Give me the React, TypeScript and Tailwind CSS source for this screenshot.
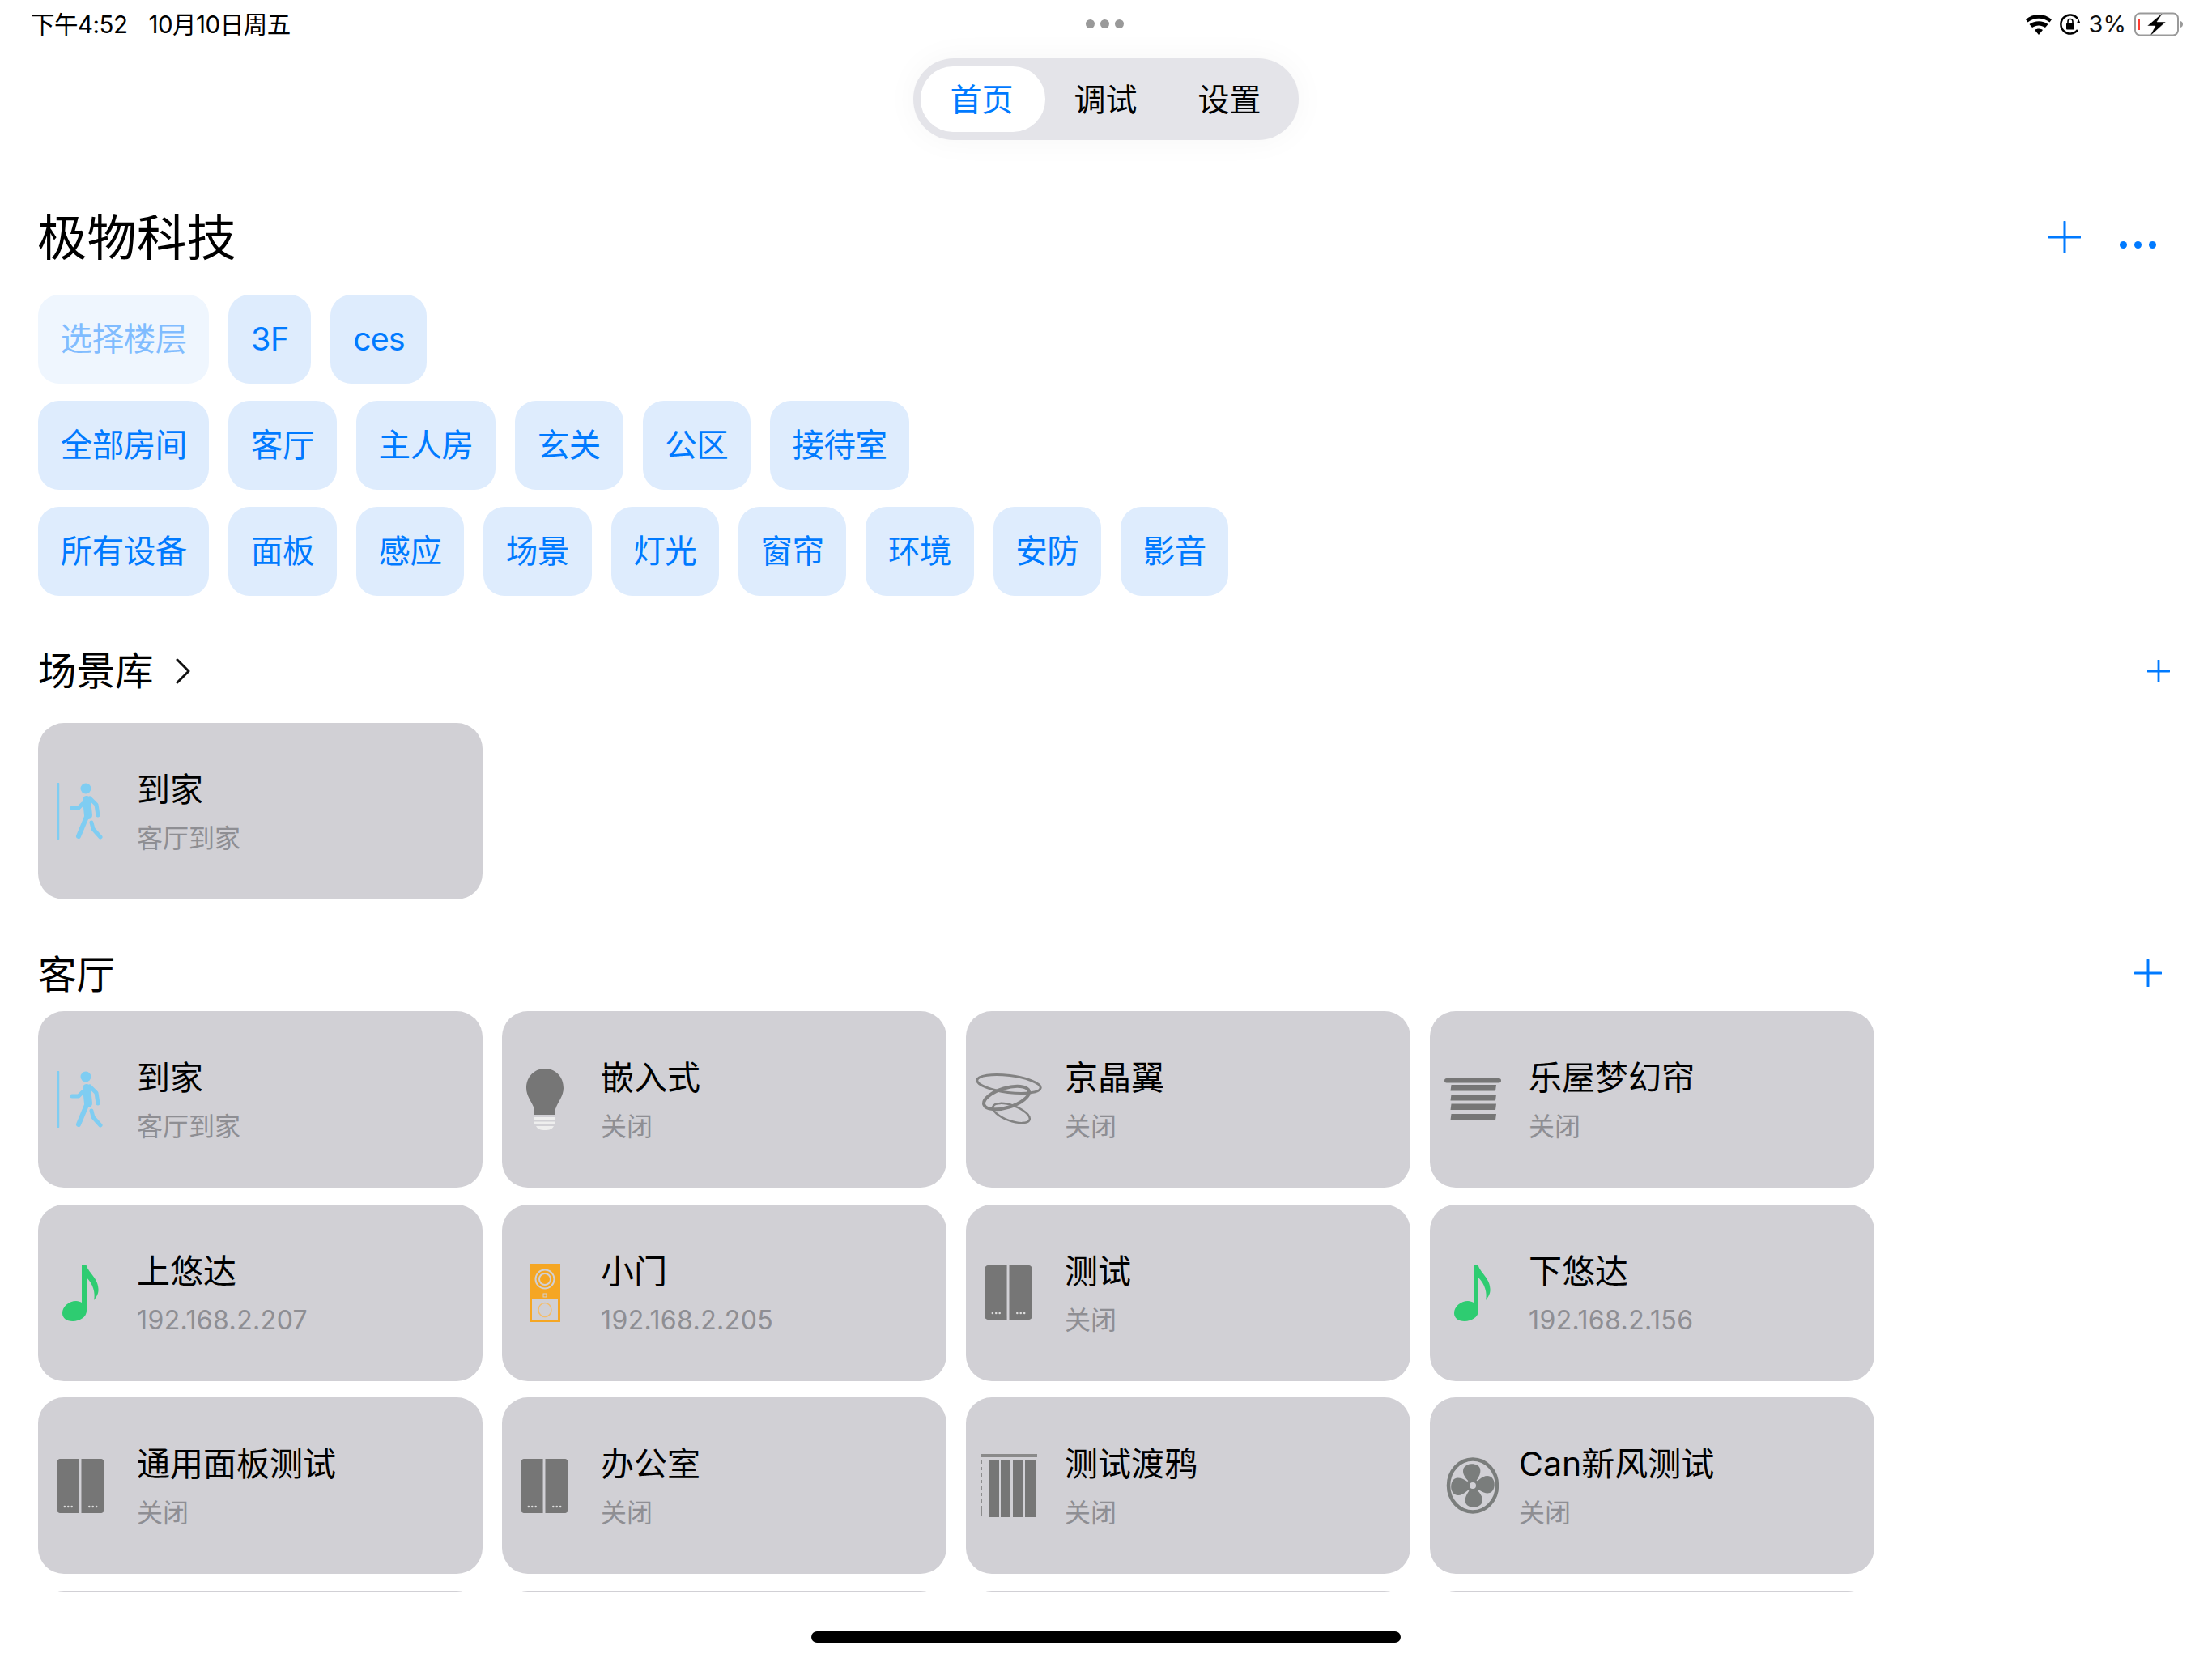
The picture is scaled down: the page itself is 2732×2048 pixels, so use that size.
import React from "react";

const Person = () => (
  <svg width="60" height="70" viewBox="0 0 60 70" fill="none">
    <path d="M2 1V69" stroke="#7fcdf2" strokeWidth="2.5" strokeLinecap="round" />
    <circle cx="36" cy="7" r="6.5" fill="#7fcdf2" />
    <path d="M19 31H27L32 26" stroke="#7fcdf2" strokeWidth="5" strokeLinecap="round" strokeLinejoin="round" />
    <path d="M41 19L49 27L51 40" stroke="#7fcdf2" strokeWidth="5" strokeLinecap="round" strokeLinejoin="round" />
    <path d="M37 21L39 40" stroke="#7fcdf2" strokeWidth="10" strokeLinecap="round" />
    <path d="M37 42L27 66" stroke="#7fcdf2" strokeWidth="6" strokeLinecap="round" />
    <path d="M43 49L45 57L54 67" stroke="#7fcdf2" strokeWidth="5" strokeLinecap="round" strokeLinejoin="round" />
  </svg>
);

const Bulb = () => (
  <svg width="46" height="76" viewBox="0 0 46 76">
    <path d="M23 0C10 0 0 10 0 24C0 34 7 41 10 50L10 57H36L36 50C39 41 46 34 46 24C46 10 36 0 23 0Z" fill="#767676" />
    <path d="M10 60H36V63H10ZM10 65.5H36V68.5H10Z" fill="#eeeeee" />
    <path d="M12 71H34C32 75 28 76 23 76C18 76 14 75 12 71Z" fill="#eeeeee" />
  </svg>
);

const Rings = () => (
  <svg width="82" height="66" viewBox="0 0 82 66" fill="none" stroke="#828282">
    <ellipse cx="41" cy="14" rx="39.500" ry="10.500" transform="rotate(7 41 14)" strokeWidth="3" />
    <ellipse cx="38" cy="31" rx="29" ry="12" transform="rotate(-17 38 31)" strokeWidth="4" />
    <ellipse cx="44" cy="50" rx="24" ry="9.500" transform="rotate(20 44 50)" strokeWidth="2.500" />
  </svg>
);

const Shade = () => (
  <svg width="70" height="52" viewBox="0 0 70 52">
    <rect x="0" y="0" width="70" height="5.500" rx="2.700" fill="#767676" />
    <path d="M8.500 8H64L63 15.500H7.500ZM8.500 20H64L63 27.500H7.500ZM8.500 31.500H64L63 39H7.500ZM8.500 44H64L63 51.500H7.500Z" fill="#767676" />
  </svg>
);

const Note = () => (
  <svg width="46" height="70" viewBox="0 0 46 70">
    <path d="M24 0H29.500C31 9 44 16 44.500 30C45 36 42 40 39 44C41 35 38 24 30 16V57C30 65 21 70 13 70C5 70 0 66 0 60C0 52 8 45 17 45C20 45 22 46 24 47Z" fill="#2ecc71" />
  </svg>
);

const Doorbell = () => (
  <svg width="38" height="72" viewBox="0 0 38 72">
    <rect width="38" height="72" fill="#f5a623" />
    <circle cx="19" cy="19" r="11.500" fill="none" stroke="#d1d0d5" strokeWidth="2" />
    <circle cx="19" cy="19" r="7" fill="none" stroke="#d1d0d5" strokeWidth="2" />
    <circle cx="19" cy="19" r="2" fill="#f5a623" />
    <rect x="17" y="37" width="4" height="4" fill="none" stroke="#d1d0d5" />
    <rect x="3" y="44" width="32" height="26" fill="#d1d0d5" />
    <ellipse cx="19" cy="57" rx="8" ry="8.500" fill="none" stroke="#f5bd6a" strokeWidth="1.500" />
  </svg>
);

const PanelIcon = () => (
  <svg width="59" height="67" viewBox="0 0 60 67" preserveAspectRatio="none">
    <path d="M5 0H28V67H5C2 67 0 65 0 62V5C0 2 2 0 5 0Z" fill="#767676" />
    <path d="M31 0H55C58 0 60 2 60 5V62C60 65 58 67 55 67H31Z" fill="#767676" />
    <g fill="#dddddd">
      <circle cx="10" cy="59" r="1.300" /><circle cx="14.500" cy="59" r="1.300" /><circle cx="19" cy="59" r="1.300" />
      <circle cx="41" cy="59" r="1.300" /><circle cx="45.500" cy="59" r="1.300" /><circle cx="50" cy="59" r="1.300" />
    </g>
  </svg>
);

const Blinds = () => (
  <svg width="70" height="78" viewBox="0 0 70 78">
    <rect x="0" y="0" width="70" height="4" fill="#8a8a8a" />
    <path d="M1 8V12M1 16V20M1 24V28M1 32V36M1 40V44M1 48V52M1 56V60M1 64V76" stroke="#767676" strokeWidth="1.500" />
    <rect x="10" y="8" width="13" height="70" fill="#767676" />
    <rect x="25" y="8" width="11" height="70" fill="#767676" />
    <rect x="40" y="8" width="12" height="70" fill="#767676" />
    <rect x="55" y="8" width="14" height="70" fill="#767676" />
  </svg>
);

const blade = "M0 0C-6 -6 -15 -14 -11 -22C-7 -29 7 -28 9 -21C11 -14 5 -7 0 0Z";

const Fan = () => (
  <svg width="66" height="70" viewBox="0 0 66 70">
    <ellipse cx="33" cy="35" rx="30" ry="32.500" fill="none" stroke="#7a7d7c" strokeWidth="4.500" />
    <g fill="#7a7d7c" transform="translate(33 35)">
      <path d={blade} />
      <path d={blade} transform="rotate(90)" />
      <path d={blade} transform="rotate(180)" />
      <path d={blade} transform="rotate(270)" />
      <circle r="8" />
      <circle r="4" fill="#d1d0d5" />
    </g>
  </svg>
);

type Item = { icon: React.ReactNode; title: string; sub: string; tight?: boolean };

const rows: Item[] = [
  { icon: <Person />, title: "到家", sub: "客厅到家" },
  { icon: <Bulb />, title: "嵌入式", sub: "关闭" },
  { icon: <Rings />, title: "京晶翼", sub: "关闭" },
  { icon: <Shade />, title: "乐屋梦幻帘", sub: "关闭" },
  { icon: <Note />, title: "上悠达", sub: "192.168.2.207" },
  { icon: <Doorbell />, title: "小门", sub: "192.168.2.205" },
  { icon: <PanelIcon />, title: "测试", sub: "关闭" },
  { icon: <Note />, title: "下悠达", sub: "192.168.2.156" },
  { icon: <PanelIcon />, title: "通用面板测试", sub: "关闭" },
  { icon: <PanelIcon />, title: "办公室", sub: "关闭" },
  { icon: <Blinds />, title: "测试渡鸦", sub: "关闭" },
  { icon: <Fan />, title: "Can新风测试", sub: "关闭", tight: true },
];

const Card = ({ item }: { item: Item }) => (
  <div className="flex h-[218px] items-center rounded-[32px] bg-[#d1d0d5]">
    <div className={`flex shrink-0 items-center justify-center pr-[17px] ${item.tight ? "w-[110px] pl-[12px]" : "w-[122px]"}`}>{item.icon}</div>
    <div className="flex flex-col pt-[7px]">
      <div className="text-[41px] leading-[46px] text-black">{item.title}</div>
      <div className={`mt-[15px] text-[32px] leading-[46px] text-[#8e8e93] ${item.sub.includes(".") ? "tracking-[0.4px]" : ""}`}>{item.sub}</div>
    </div>
  </div>
);

const Chip = ({ label, dim, narrow }: { label: string; dim?: boolean; narrow?: boolean }) => (
  <div className={`flex h-[110px] items-center rounded-[26px] px-[27.7px] pt-[2px] text-[39.5px] ${narrow ? "tracking-[-1px]" : "tracking-[-0.5px]"} ${dim ? "bg-[#eff6fe] text-[#80bcff]" : "bg-[#deecfd] text-[#007aff]"}`}>
    {label}
  </div>
);

const Plus = ({ size, stroke }: { size: number; stroke: number }) => (
  <svg width={size} height={size} viewBox="0 0 40 40" fill="none" stroke="#007aff" strokeWidth={stroke} strokeLinecap="round">
    <path d="M20 1V39M1 20H39" />
  </svg>
);

export default function App() {
  return (
    <div className="relative h-[2048px] w-[2732px] overflow-hidden bg-white font-['Inter','Noto_Sans_CJK_SC',sans-serif] text-black">
      <div className="relative flex h-[60px] items-center justify-between pl-[38px] pr-[34px] text-[29.5px]">
        <div className="flex gap-[26px] tracking-[-0.5px]">
          <span>下午4:52</span>
          <span>10月10日周五</span>
        </div>
        <div className="absolute left-[1341px] top-[24px] flex gap-[7px]">
          <span className="h-[11px] w-[11px] rounded-full bg-[#999999]" />
          <span className="h-[11px] w-[11px] rounded-full bg-[#999999]" />
          <span className="h-[11px] w-[11px] rounded-full bg-[#999999]" />
        </div>
        <div className="flex items-center gap-[10px]">
          <svg width="32" height="26" viewBox="0 0 32 26">
            <path d="M16 26L11 20C14 18 18 18 21 20ZM8 17L4.500 13C11 8 21 8 27.500 13L24 17C19 13.500 13 13.500 8 17ZM2.500 10.500L0 7C9 -1 23 -1 32 7L29.500 10.500C22 4 10 4 2.500 10.500Z" fill="#000" />
          </svg>
          <svg width="26" height="26" viewBox="0 0 26 26" fill="none">
            <path d="M22 20A11.500 11.500 0 1 1 22 6" stroke="#000" strokeWidth="2.500" />
            <path d="M25.500 12L21 12L23 6Z" fill="#000" />
            <rect x="8" y="11.500" width="10" height="8" rx="1" fill="#000" />
            <path d="M10 12V9.500A3 3 0 0 1 16 9.500V12" stroke="#000" strokeWidth="1.600" />
          </svg>
          <span className="text-[29px] text-[#111111]">3%</span>
          <svg width="62" height="30" viewBox="0 0 62 30" fill="none">
            <rect x="1" y="1.500" width="53" height="27" rx="6" stroke="#9a9a9a" strokeWidth="2" />
            <rect x="5" y="8" width="2" height="14" fill="#ff3b30" />
            <path d="M57 11C59.500 12 60 13.500 60 15C60 16.500 59.500 18 57 19Z" fill="#9a9a9a" />
            <path d="M36 0L16 17H26L19 30L39 12H28Z" fill="#000" stroke="#fff" strokeWidth="0.500" />
          </svg>
        </div>
      </div>

      <div className="mt-[12px] flex justify-center">
        <div className="flex h-[101px] w-[476px] items-center rounded-[50px] bg-[#e4e4e9] px-[9px] text-[39px] shadow-[0_0_40px_rgba(0,0,0,0.04)]">
          <div className="flex h-[81px] w-[154px] items-center justify-center rounded-[40px] bg-white pr-[3px] pt-[2px] text-[#007aff]">首页</div>
          <div className="flex h-[81px] w-[152px] items-center justify-center pr-[3px] pt-[2px]">调试</div>
          <div className="flex h-[81px] w-[152px] items-center justify-center pr-[1px] pt-[2px]">设置</div>
        </div>
      </div>

      <div className="flex h-[1794px] flex-col overflow-hidden px-[47px]">
        <div className="mt-[77px] flex h-[86px] items-center justify-between">
          <div className="pt-[2px] text-[61.5px] leading-[86px] -ml-[1px]">极物科技</div>
          <div className="flex items-center gap-[48px] pr-[22px]">
            <Plus size={40} stroke={3} />
            <div className="flex translate-y-[9px] gap-[9px]">
              <span className="h-[9px] w-[9px] rounded-full bg-[#007aff]" />
              <span className="h-[9px] w-[9px] rounded-full bg-[#007aff]" />
              <span className="h-[9px] w-[9px] rounded-full bg-[#007aff]" />
            </div>
          </div>
        </div>

        <div className="mt-[28px] flex flex-col gap-[21px]">
          <div className="flex gap-[24px]">
            <Chip label="选择楼层" dim />
            <Chip label="3F" />
            <Chip label="ces" narrow />
          </div>
          <div className="flex gap-[24px]">
            {["全部房间", "客厅", "主人房", "玄关", "公区", "接待室"].map((t) => (
              <Chip key={t} label={t} />
            ))}
          </div>
          <div className="flex gap-[24px]">
            {["所有设备", "面板", "感应", "场景", "灯光", "窗帘", "环境", "安防", "影音"].map((t) => (
              <Chip key={t} label={t} />
            ))}
          </div>
        </div>

        <div className="mt-[59px] flex h-[68px] items-center justify-between">
          <div className="flex items-center gap-[27px]">
            <span className="text-[47.5px]">场景库</span>
            <svg width="18" height="32" viewBox="0 0 18 32" fill="none" stroke="#111" strokeWidth="3" strokeLinecap="round" strokeLinejoin="round">
              <path d="M2 2L16 16L2 30" />
            </svg>
          </div>
          <div className="pr-[5px]"><Plus size={28} stroke={4} /></div>
        </div>

        <div className="mt-[30px] grid w-[2268px] grid-cols-4 gap-x-[24px]">
          <Card item={rows[0]} />
        </div>

        <div className="mt-[57px] flex h-[68px] items-center justify-between">
          <span className="pt-[3px] text-[47.5px]">客厅</span>
          <div className="pr-[15px]"><Plus size={34} stroke={3.500} /></div>
        </div>

        <div className="mt-[13px] grid w-[2268px] grid-cols-4 gap-x-[24px] gap-y-[20.500px]">
          {rows.map((it, i) => (
            <Card key={i} item={it} />
          ))}
          <div className="h-[218px] rounded-[32px] bg-[#d1d0d5]" />
          <div className="h-[218px] rounded-[32px] bg-[#d1d0d5]" />
          <div className="h-[218px] rounded-[32px] bg-[#d1d0d5]" />
          <div className="h-[218px] rounded-[32px] bg-[#d1d0d5]" />
        </div>
      </div>

      <div className="absolute bottom-[19px] left-[1002px] h-[14px] w-[728px] rounded-full bg-black" />
    </div>
  );
}
